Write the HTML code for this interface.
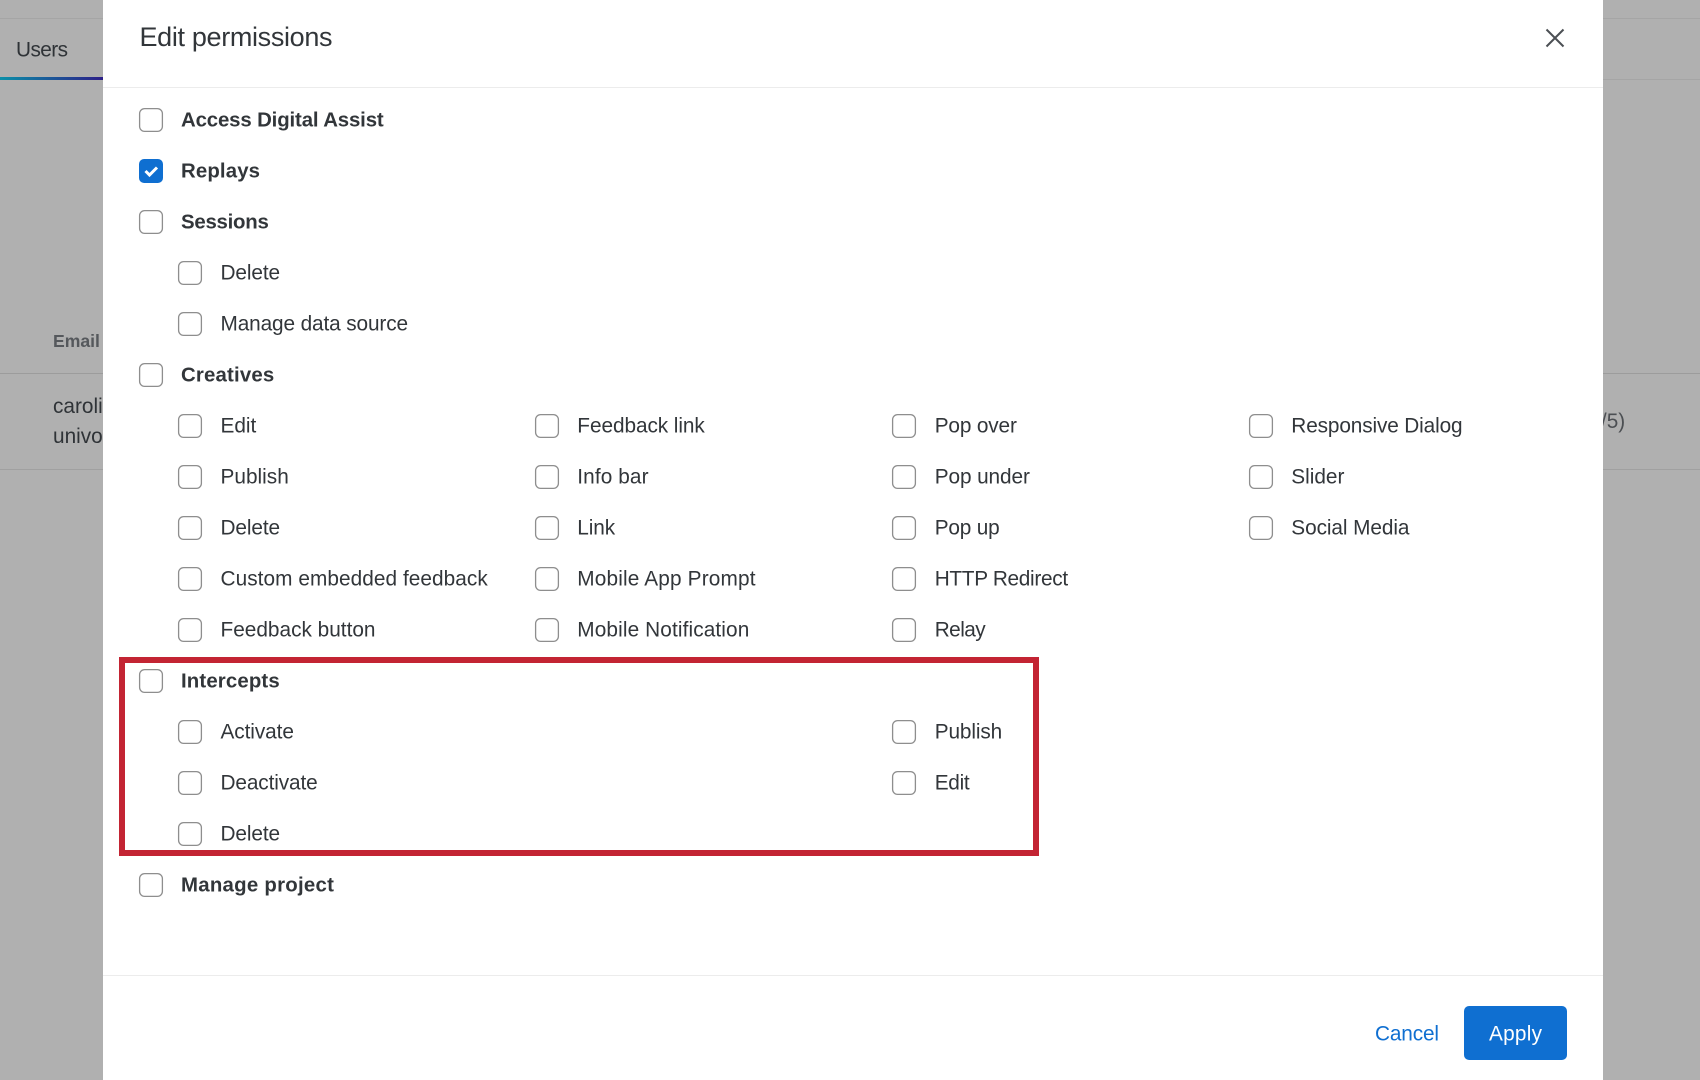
<!DOCTYPE html>
<html lang="en"><head><meta charset="utf-8"><title>Edit permissions</title>
<style>
html,body{margin:0;padding:0;width:1700px;height:1080px;overflow:hidden;background:#b0b0b0}
svg{display:block}
text{font-family:"Liberation Sans",sans-serif;font-size:20.8px;fill:#32363a}
.b{font-weight:700;font-size:20.4px}
rect.c{fill:#fff;stroke:#8e8e8e;stroke-width:1.3}
</style></head><body>
<svg width="1700" height="1080" viewBox="0 0 1700 1080" xmlns="http://www.w3.org/2000/svg">
<defs><linearGradient id="g" x1="0" x2="1" y1="0" y2="0"><stop offset="0" stop-color="#0b8fa8"/><stop offset="1" stop-color="#2d1f88"/></linearGradient></defs>
<rect width="1700" height="1080" fill="#b0b0b0"/>
<rect x="0" y="18" width="1700" height="1" fill="#a5a5a5"/>
<rect x="0" y="79" width="1700" height="1" fill="#a5a5a5"/>
<rect x="0" y="373" width="1700" height="1" fill="#9c9c9c"/>
<rect x="0" y="469" width="1700" height="1" fill="#a0a0a0"/>
<rect x="0" y="77" width="103" height="3" fill="url(#g)"/>
<text x="16" y="56.5" textLength="52" style="fill:#2f3337">Users</text>
<text x="53" y="347" class="b" style="font-size:17.6px;fill:#55585c">Email</text>
<text x="53" y="413" style="fill:#2f3337">caroline</text>
<text x="53" y="443" style="fill:#2f3337">univo</text>
<text x="1594" y="428" style="fill:#4c4f53">(/5)</text>

<rect x="103" y="0" width="1500" height="1080" fill="#fff"/>
<rect x="103" y="87" width="1500" height="1" fill="#ececec"/>
<rect x="103" y="975" width="1500" height="1" fill="#ececec"/>
<text x="139.5" y="46" textLength="193" style="font-size:27px">Edit permissions</text>
<path d="M1546.5 29.5L1563.5 46.5M1563.5 29.5L1546.5 46.5" stroke="#4b4f54" stroke-width="2" fill="none"/>

<rect x="1464" y="1006" width="103" height="54" rx="5" fill="#0f6fd1"/>
<text x="1375" y="1040.5" textLength="64" style="fill:#0f6fd1">Cancel</text>
<text x="1489" y="1040.5" textLength="53" style="fill:#fff">Apply</text>

<rect x="122" y="660" width="914" height="193" fill="none" stroke="#c32433" stroke-width="6"/>

<!-- top-level -->
<rect class="c" x="139.6" y="108.6" width="22.8" height="22.8" rx="5"/>
<text class="b" x="181" y="126.3" textLength="202.7">Access Digital Assist</text>
<rect x="139" y="159" width="24" height="24" rx="5" fill="#0f6fd1"/>
<path d="M145.5 171L149.5 175L157 167.5" stroke="#fff" stroke-width="3" fill="none"/>
<text class="b" x="181" y="177.3" textLength="79">Replays</text>
<rect class="c" x="139.6" y="210.6" width="22.8" height="22.8" rx="5"/>
<text class="b" x="181" y="228.3" textLength="87.8">Sessions</text>
<rect class="c" x="178.6" y="261.6" width="22.8" height="22.8" rx="5"/>
<text x="220.5" y="279.3" textLength="59.6">Delete</text>
<rect class="c" x="178.6" y="312.6" width="22.8" height="22.8" rx="5"/>
<text x="220.5" y="330.3" textLength="187.6">Manage data source</text>
<rect class="c" x="139.6" y="363.6" width="22.8" height="22.8" rx="5"/>
<text class="b" x="181" y="381.3" textLength="93.2">Creatives</text>

<!-- col 1 -->
<rect class="c" x="178.6" y="414.6" width="22.8" height="22.8" rx="5"/>
<text x="220.5" y="432.3" textLength="35.8">Edit</text>
<rect class="c" x="178.6" y="465.6" width="22.8" height="22.8" rx="5"/>
<text x="220.5" y="483.3" textLength="68.3">Publish</text>
<rect class="c" x="178.6" y="516.6" width="22.8" height="22.8" rx="5"/>
<text x="220.5" y="534.3" textLength="59.6">Delete</text>
<rect class="c" x="178.6" y="567.6" width="22.8" height="22.8" rx="5"/>
<text x="220.5" y="585.3" textLength="267.3">Custom embedded feedback</text>
<rect class="c" x="178.6" y="618.6" width="22.8" height="22.8" rx="5"/>
<text x="220.5" y="636.3" textLength="155">Feedback button</text>
<!-- col 2 -->
<rect class="c" x="535.6" y="414.6" width="22.8" height="22.8" rx="5"/>
<text x="577.3" y="432.3" textLength="127.5">Feedback link</text>
<rect class="c" x="535.6" y="465.6" width="22.8" height="22.8" rx="5"/>
<text x="577.3" y="483.3" textLength="71.2">Info bar</text>
<rect class="c" x="535.6" y="516.6" width="22.8" height="22.8" rx="5"/>
<text x="577.3" y="534.3" textLength="37.9">Link</text>
<rect class="c" x="535.6" y="567.6" width="22.8" height="22.8" rx="5"/>
<text x="577.3" y="585.3" textLength="178.2">Mobile App Prompt</text>
<rect class="c" x="535.6" y="618.6" width="22.8" height="22.8" rx="5"/>
<text x="577.3" y="636.3" textLength="172">Mobile Notification</text>
<!-- col 3 -->
<rect class="c" x="892.6" y="414.6" width="22.8" height="22.8" rx="5"/>
<text x="934.7" y="432.3" textLength="82.2">Pop over</text>
<rect class="c" x="892.6" y="465.6" width="22.8" height="22.8" rx="5"/>
<text x="934.7" y="483.3" textLength="95.2">Pop under</text>
<rect class="c" x="892.6" y="516.6" width="22.8" height="22.8" rx="5"/>
<text x="934.7" y="534.3" textLength="65">Pop up</text>
<rect class="c" x="892.6" y="567.6" width="22.8" height="22.8" rx="5"/>
<text x="934.7" y="585.3" textLength="133.4">HTTP Redirect</text>
<rect class="c" x="892.6" y="618.6" width="22.8" height="22.8" rx="5"/>
<text x="934.7" y="636.3" textLength="51">Relay</text>
<!-- col 4 -->
<rect class="c" x="1249.6" y="414.6" width="22.8" height="22.8" rx="5"/>
<text x="1291.3" y="432.3" textLength="171.3">Responsive Dialog</text>
<rect class="c" x="1249.6" y="465.6" width="22.8" height="22.8" rx="5"/>
<text x="1291.3" y="483.3" textLength="53.1">Slider</text>
<rect class="c" x="1249.6" y="516.6" width="22.8" height="22.8" rx="5"/>
<text x="1291.3" y="534.3" textLength="118.2">Social Media</text>

<!-- intercepts -->
<rect class="c" x="139.6" y="669.6" width="22.8" height="22.8" rx="5"/>
<text class="b" x="181" y="687.3" textLength="98.7">Intercepts</text>
<rect class="c" x="178.6" y="720.6" width="22.8" height="22.8" rx="5"/>
<text x="220.5" y="738.3" textLength="73.4">Activate</text>
<rect class="c" x="178.6" y="771.6" width="22.8" height="22.8" rx="5"/>
<text x="220.5" y="789.3" textLength="97.2">Deactivate</text>
<rect class="c" x="178.6" y="822.6" width="22.8" height="22.8" rx="5"/>
<text x="220.5" y="840.3" textLength="59.6">Delete</text>
<rect class="c" x="892.6" y="720.6" width="22.8" height="22.8" rx="5"/>
<text x="934.7" y="738.3" textLength="67.5">Publish</text>
<rect class="c" x="892.6" y="771.6" width="22.8" height="22.8" rx="5"/>
<text x="934.7" y="789.3" textLength="35">Edit</text>
<rect class="c" x="139.6" y="873.6" width="22.8" height="22.8" rx="5"/>
<text class="b" x="181" y="891.3" textLength="152.9">Manage project</text>
</svg>
</body></html>
